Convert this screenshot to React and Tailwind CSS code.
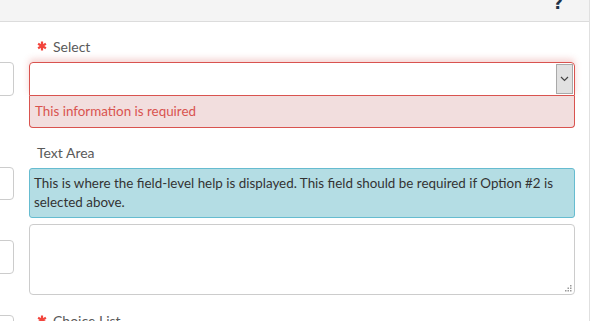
import React from "react";

const LeftStub = ({ className }) => (
  <div className={`w-[40px] -ml-[26px] rounded border border-[#ccc] bg-white ${className}`} />
);

// red required-field asterisk (icon-font style)
const Asterisk = () => (
  <svg className="mr-[6px]" width="10" height="10" viewBox="0 0 10 10">
    <g stroke="#f2453d" strokeWidth="2.2" strokeLinecap="butt">
      <path d="M5 0.5v9" />
      <path d="M1.1 2.75l7.8 4.5" />
      <path d="M1.1 7.25l7.8-4.5" />
    </g>
  </svg>
);

export default function App() {
  return (
    <div
      className="h-[321px] w-[607px] overflow-hidden bg-white text-[13.4px] text-[#333]"
      style={{ fontFamily: "Lato, 'Liberation Sans', sans-serif" }}
    >
      <div className="h-full w-[590px] border-r border-[#e0e0e0]">
        {/* header strip */}
        <div className="flex h-[22px] items-start justify-end overflow-hidden border-b border-[#dcdcdc] bg-[#f4f4f4] pr-[26px]">
          <span
            className="-mt-[5px] text-[17px] font-bold leading-none text-[#1d3349]"
            style={{ fontFamily: "'DejaVu Sans', sans-serif" }}
          >
            ?
          </span>
        </div>

        <div className="flex">
          {/* previous column, mostly cut off */}
          <div className="flex w-[14px] flex-col overflow-hidden">
            <LeftStub className="mt-[40px] h-[34px]" />
            <LeftStub className="mt-[71px] h-[33px]" />
            <LeftStub className="mt-[40px] h-[34px]" />
            <LeftStub className="mt-[41px] h-[34px]" />
          </div>

          {/* main column */}
          <div className="ml-[15px] w-[546px]">
            <div className="mt-[15px] flex h-[18px] items-center pl-[8px] text-[14px] text-[#5a5a5a]">
              <Asterisk />
              <span>Select</span>
            </div>

            <div className="mt-[7px] rounded-t shadow-[0_-3px_6px_rgba(217,83,79,0.25)]">
              <div className="flex h-[34px] rounded-t border border-[#d9534f] bg-white">
                <div className="flex-1" />
                <div className="my-[1px] mr-[1px] flex w-[17px] items-center justify-center border border-[#a9a9a9] bg-[#e1e1e1]">
                  <svg width="9" height="6" viewBox="0 0 9 6" fill="none">
                    <path d="M1 1l3.5 3.5L8 1" stroke="#444" strokeWidth="1.2" />
                  </svg>
                </div>
              </div>
            </div>
            <div className="flex h-[32px] items-center rounded-b border border-t-0 border-[#d9534f] bg-[#f2dede] pl-[5px] text-[#d9534f]">
              This information is required
            </div>

            <div className="mt-[16px] h-[18px] pl-[8px] text-[14px] leading-[18px] text-[#5a5a5a]">Text Area</div>

            <div className="mt-[6px] rounded-[3px] border border-[#66bcd0] bg-[#b4dde4] px-[4px] py-[5px] leading-[19px] text-[#333]">
              This is where the field-level help is displayed. This field should be required if Option #2 is
              selected above.
            </div>

            <div className="relative mt-[6px] h-[71px] rounded border border-[#ccc] bg-white">
              <svg className="absolute bottom-[2px] right-[2px]" width="7" height="7" viewBox="0 0 7 7">
                <rect x="5" y="0" width="1.5" height="1.5" fill="#999" />
                <rect x="2.5" y="2.5" width="1.5" height="1.5" fill="#999" />
                <rect x="5" y="2.5" width="1.5" height="1.5" fill="#999" />
                <rect x="0" y="5" width="1.5" height="1.5" fill="#999" />
                <rect x="2.5" y="5" width="1.5" height="1.5" fill="#999" />
                <rect x="5" y="5" width="1.5" height="1.5" fill="#999" />
              </svg>
            </div>

            <div className="mt-[16px] flex h-[18px] items-center pl-[8px] text-[14px] text-[#5a5a5a]">
              <Asterisk />
              <span>Choice List</span>
            </div>
          </div>
        </div>
      </div>
    </div>
  );
}
